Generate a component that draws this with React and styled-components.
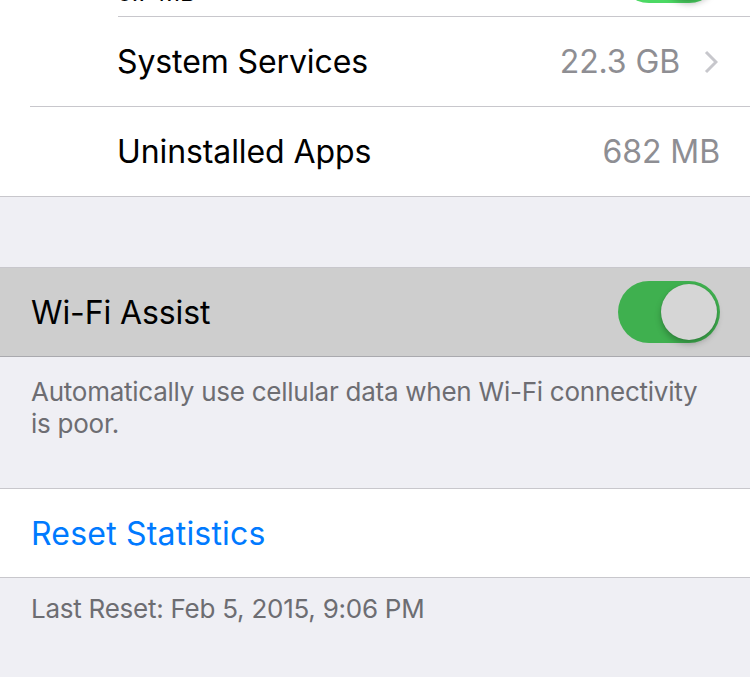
import React from "react";
import styled, { createGlobalStyle } from "styled-components";

const GlobalStyle = createGlobalStyle`
  html, body {
    margin: 0;
    padding: 0;
    background: #efeff4;
    font-family: Inter, "Noto Sans", "Liberation Sans", sans-serif;
    -webkit-font-smoothing: antialiased;
  }
  #root {
    width: 750px;
    height: 677px;
    overflow: hidden;
  }
`;

const Screen = styled.div`
  width: 750px;
  height: 677px;
  overflow: hidden;
  background: #efeff4;
`;

// list is scrolled: the first app row sits mostly above the top edge
const Scroll = styled.div`
  margin-top: -73px;
`;

const Group = styled.div`
  background: ${(p) => (p.$highlight ? "#cecece" : "#fff")};
  border-top: ${(p) => (p.$top ? "1px solid #c8c7cc" : "none")};
  border-bottom: 1px solid ${(p) => (p.$highlight ? "#a9a9ae" : "#c8c7cc")};
`;

const Row = styled.div`
  position: relative;
  height: ${(p) => p.$h || 88}px;
  display: flex;
  align-items: center;
  padding: 0 30px 0 ${(p) => p.$indent || 31}px;
  box-sizing: content-box;
  &::after {
    content: "";
    display: ${(p) => (p.$sep === undefined ? "none" : "block")};
    position: absolute;
    left: ${(p) => p.$sep || 0}px;
    right: 0;
    bottom: -1px;
    height: 1px;
    background: #c8c7cc;
  }
  & + & {
    margin-top: 1px;
  }
`;

const Label = styled.div`
  flex: 1;
  font-size: 32px;
  letter-spacing: ${(p) => (p.$blue ? "0.2px" : "-0.1px")};
  color: ${(p) => (p.$blue ? "#007aff" : "#000")};
`;

const TitleStack = styled.div`
  flex: 1;
  display: flex;
  flex-direction: column;
`;

const SubLabel = styled.div`
  font-size: 24px;
  color: #000;
  margin-top: 2px;
`;

const Value = styled.div`
  font-size: 32px;
  letter-spacing: -0.1px;
  color: #8e8e93;
`;

const Chevron = styled.svg`
  margin-left: 24px;
  width: 14px;
  height: 24px;
  margin-right: 2px;
`;

const Switch = styled.div`
  position: relative;
  width: 102px;
  height: 62px;
  border-radius: 31px;
  background: ${(p) => p.$color};
  flex: none;
`;

const Knob = styled.div`
  position: absolute;
  right: 3px;
  top: 3px;
  width: 56px;
  height: 56px;
  border-radius: 50%;
  background: ${(p) => p.$color};
  box-shadow: 0 4px 6px rgba(0, 0, 0, 0.25), 0 0 1px rgba(0, 0, 0, 0.2);
`;

const Gap = styled.div`
  height: ${(p) => p.$h}px;
`;

const Footer = styled.div`
  padding: ${(p) => p.$pad};
  font-size: 26px;
  line-height: 32px;
  color: #6d6d72;
  letter-spacing: -0.25px;
`;

function Toggle({ track, knob }) {
  return (
    <Switch $color={track}>
      <Knob $color={knob} />
    </Switch>
  );
}

export default function App() {
  return (
    <Screen>
      <GlobalStyle />
      <Scroll>
        <Group>
          <Row $h={89} $indent={117} $sep={118}>
            <TitleStack>
              <Label>Google Maps</Label>
              <SubLabel>0.7 MB</SubLabel>
            </TitleStack>
            <Toggle track="#4cd964" knob="#fff" />
          </Row>
          <Row $h={89} $indent={117} $sep={30}>
            <Label>System Services</Label>
            <Value>22.3 GB</Value>
            <Chevron viewBox="0 0 14 24">
              <path d="M2 2 L12 12 L2 22" fill="none" stroke="#c7c7cc" strokeWidth="3" />
            </Chevron>
          </Row>
          <Row $h={89} $indent={117}>
            <Label>Uninstalled Apps</Label>
            <Value>682 MB</Value>
          </Row>
        </Group>
        <Gap $h={70} />
        <Group $top $highlight>
          <Row>
            <Label>Wi-Fi Assist</Label>
            <Toggle track="#3fb04f" knob="#d6d6d6" />
          </Row>
        </Group>
        <Footer $pad="19px 40px 48px 31px">
          Automatically use cellular data when Wi-Fi connectivity is poor.
        </Footer>
        <Group $top>
          <Row>
            <Label $blue>Reset Statistics</Label>
          </Row>
        </Group>
        <Footer $pad="15px 31px">Last Reset: Feb 5, 2015, 9:06 PM</Footer>
      </Scroll>
    </Screen>
  );
}
